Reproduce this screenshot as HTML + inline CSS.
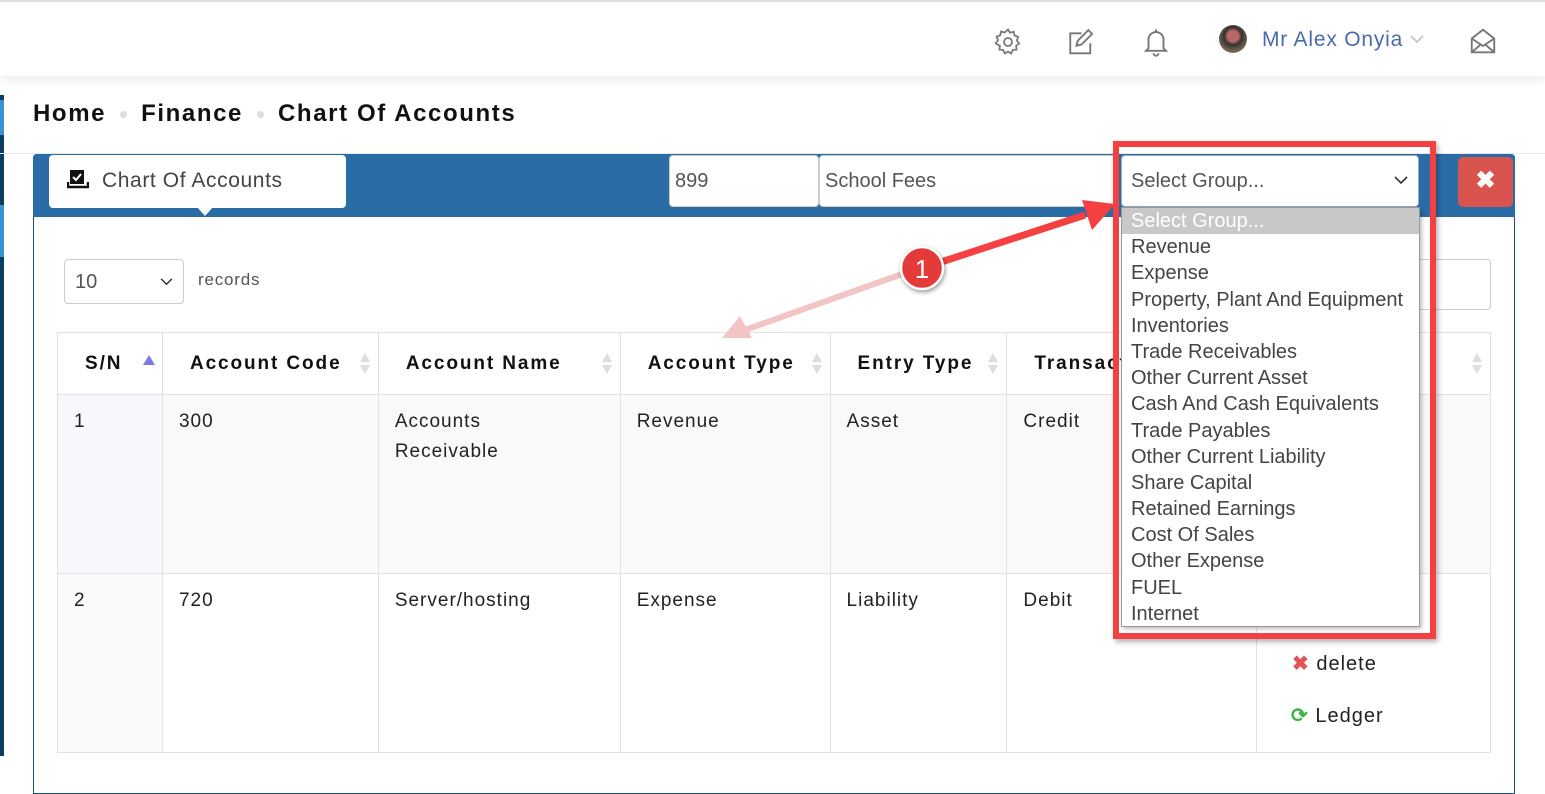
<!DOCTYPE html>
<html><head><meta charset="utf-8"><style>
*{box-sizing:border-box;margin:0;padding:0}
body{width:1545px;height:756px;overflow:hidden;background:#fff;font-family:"Liberation Sans",sans-serif;position:relative}
.abs{position:absolute}
.hdr{left:0;top:0;width:1545px;height:76px;background:#fff;border-top:2px solid #ddd;box-shadow:0 4px 10px rgba(0,0,0,.08)}
.crumb{top:100px;left:33px;font-size:24px;font-weight:bold;color:#111;letter-spacing:1.6px}
.crumb span.d{display:inline-block;width:7px;height:7px;border-radius:50%;background:#ddd;margin:0 14px;vertical-align:middle}
.inp{background:#fff;border:1px solid #ccc;border-radius:4px;font-size:20px;color:#555;padding-left:6px;line-height:50px}
th,td{border:1px solid #e2e2e2;text-align:left}
th{font-size:19px;font-weight:bold;color:#111;letter-spacing:1.9px;height:62px;padding:0 14px 0 27px;position:relative}
td{vertical-align:top;font-size:19px;color:#222;letter-spacing:1px;padding:12px 16px;line-height:30px}
.srt{position:absolute;right:8px;top:20px;width:10px;height:22px}
.srt:before,.srt:after{content:"";position:absolute;left:0;border-left:5px solid transparent;border-right:5px solid transparent}
.srt:before{top:0;border-bottom:9px solid #ddd}
.srt:after{top:12px;border-top:9px solid #ddd}
.dd div{height:26.2px;line-height:26px;padding-left:9px;font-size:20px;color:#444;white-space:nowrap}
.chev{position:absolute;right:10px;top:20px}
</style></head><body>
<div class="abs" style="left:0;top:95px;width:4px;height:661px;background:#0b3d5e"></div>
<div class="abs" style="left:0;top:100px;width:4px;height:35px;background:#3a93d3"></div>
<div class="abs" style="left:0;top:205px;width:4px;height:52px;background:#3a93d3"></div>
<div class="abs hdr"></div>
<svg class="abs" style="left:993px;top:27px" width="30" height="30" viewBox="0 0 24 24" fill="none" stroke="#777" stroke-width="1.4"><circle cx="12" cy="12" r="3.2"/><path d="M12 2l1.6 2.6 3-.8.6 3 2.9 1.1-1.1 2.9 1.9 2.4-2.4 1.9.4 3-3 .3-1.4 2.8-2.5-1.6-2.5 1.6-1.4-2.8-3-.3.4-3L2.1 13l1.9-2.4-1.1-2.9 2.9-1.1.6-3 3 .8z"/></svg>
<svg class="abs" style="left:1066px;top:27px" width="31" height="30" viewBox="0 0 24 24" fill="none" stroke="#777" stroke-width="1.5"><path d="M19 13v8H3V5h9"/><path d="M17.5 2.5l3 3L12 14l-4 1 1-4z"/></svg>
<svg class="abs" style="left:1141px;top:27px" width="30" height="30" viewBox="0 0 24 24" fill="none" stroke="#777" stroke-width="1.5"><path d="M6 17V10a6 6 0 0 1 12 0v7l2 2H4z"/><path d="M10 21a2 2 0 0 0 4 0"/><path d="M12 2v2"/></svg>
<div class="abs" style="left:1219px;top:25px;width:28px;height:28px;border-radius:50%;background:radial-gradient(circle at 50% 40%,#b66 0 25%,#333 40%,#765 70%)"></div>
<div class="abs" style="left:1262px;top:28px;font-size:21px;color:#4a6aa8;letter-spacing:.8px">Mr Alex Onyia</div>
<svg class="abs" style="left:1410px;top:35px" width="14" height="9" viewBox="0 0 14 9"><path d="M1 1l6 6 6-6" stroke="#bbb" stroke-width="1.5" fill="none"/></svg>
<svg class="abs" style="left:1467px;top:26px" width="32" height="30" viewBox="0 0 24 24" fill="none" stroke="#777" stroke-width="1.5"><path d="M3 10l9-7 9 7v11H3z"/><path d="M3 10l9 6 9-6M3 21l7-6M21 21l-7-6"/></svg>

<div class="abs crumb">Home<span class="d"></span>Finance<span class="d"></span>Chart Of Accounts</div>
<div class="abs" style="left:0;top:153px;width:1545px;height:1px;background:#e8e8e8"></div>

<div class="abs" style="left:33px;top:154px;width:1482px;height:640px;border:1px solid #1e4f7a;border-radius:4px 4px 0 0"></div>
<div class="abs" style="left:33px;top:154px;width:1482px;height:63px;background:#2a6ca6;border-radius:4px 4px 0 0"></div>
<div class="abs" style="left:49px;top:155px;width:297px;height:53px;background:#fff;border-radius:4px;font-size:21px;color:#444;letter-spacing:.6px;line-height:52px;padding-left:53px">Chart Of Accounts</div>
<svg class="abs" style="left:67px;top:170px" width="22" height="20" viewBox="0 0 22 20"><rect x="3" y="0" width="14" height="14" fill="#111"/><path d="M6 7l3 3 5-6" stroke="#fff" stroke-width="2" fill="none"/><path d="M1 12v5h20v-5" stroke="#111" stroke-width="2.4" fill="none"/></svg>
<div class="abs" style="left:197px;top:207px;border-left:8px solid transparent;border-right:8px solid transparent;border-top:9px solid #fff"></div>
<div class="abs inp" style="left:669px;top:155px;width:150px;height:52px;padding-left:5px">899</div>
<div class="abs inp" style="left:819px;top:155px;width:300px;height:52px;padding-left:5px">School Fees</div>
<div class="abs inp" style="left:1121px;top:155px;width:298px;height:52px;padding-left:9px;border-color:#9ab">Select Group...<svg class="chev" width="14" height="9" viewBox="0 0 14 9"><path d="M1 1l6 6 6-6" stroke="#333" stroke-width="1.6" fill="none"/></svg></div>
<div class="abs" style="left:1458px;top:157px;width:55px;height:50px;background:#d9534f;border-radius:5px;color:#fff;font-size:24px;font-weight:bold;text-align:center;line-height:48px">&#10006;</div>

<div class="abs inp" style="left:64px;top:259px;width:120px;height:45px;line-height:44px;padding-left:10px;font-size:20px">10<svg class="chev" style="top:18px" width="13" height="8" viewBox="0 0 14 9"><path d="M1 1l6 6 6-6" stroke="#333" stroke-width="1.6" fill="none"/></svg></div>
<div class="abs" style="left:198px;top:270px;font-size:17px;color:#555;letter-spacing:.8px">records</div>
<div class="abs" style="left:1400px;top:259px;width:91px;height:51px;border:1px solid #ccc;border-radius:4px"></div>

<table class="abs" style="left:57px;top:332px;width:1434px;border-collapse:collapse">
<tr><th style="width:105px;padding-left:27px">S/N<span style="position:absolute;left:85px;top:22px;border-left:6px solid transparent;border-right:6px solid transparent;border-bottom:10px solid #7a7adf"></span></th><th style="width:216px">Account Code<span class="srt"></span></th><th style="width:242px">Account Name<span class="srt"></span></th><th style="width:210px">Account Type<span class="srt"></span></th><th style="width:177px">Entry Type<span class="srt"></span></th><th style="width:250px">Transaction<span class="srt"></span></th><th style="width:234px"><span class="srt"></span></th></tr>
<tr style="background:#f9f9f9;height:179px"><td style="background:#f7f8fb">1</td><td>300</td><td>Accounts<br>Receivable</td><td>Revenue</td><td>Asset</td><td>Credit</td><td></td></tr>
<tr style="height:179px"><td style="background:#f9fafc">2</td><td>720</td><td>Server/hosting</td><td>Expense</td><td>Liability</td><td>Debit</td><td></td></tr>
</table>
<div class="abs" style="left:1292px;top:651px;font-size:20px;color:#222;letter-spacing:1px"><span style="color:#e05555;font-weight:bold">&#10006;</span> delete</div>
<div class="abs" style="left:1291px;top:703px;font-size:20px;color:#222;letter-spacing:1px"><span style="color:#3bb34a;font-weight:bold">&#10227;</span> Ledger</div>

<div class="abs dd" style="left:1121px;top:207px;width:299px;height:420px;background:#fff;border:1px solid #999;box-shadow:2px 2px 4px rgba(0,0,0,.25)">
<div style="background:#c8c8c8;color:#fff">Select Group...</div><div>Revenue</div><div>Expense</div><div>Property, Plant And Equipment</div><div>Inventories</div><div>Trade Receivables</div><div>Other Current Asset</div><div>Cash And Cash Equivalents</div><div>Trade Payables</div><div>Other Current Liability</div><div>Share Capital</div><div>Retained Earnings</div><div>Cost Of Sales</div><div>Other Expense</div><div>FUEL</div><div>Internet</div>
</div>
<div class="abs" style="left:1113px;top:141px;width:323px;height:498px;border:6px solid #f44040;box-shadow:2px 3px 5px rgba(0,0,0,.3)"></div>

<svg class="abs" style="left:0;top:0" width="1545" height="756">
<line x1="905" y1="273" x2="745" y2="330" stroke="#f2c4c4" stroke-width="6"/>
<polygon points="722,338 740,316 752,338" fill="#f2c4c4"/>
<line x1="935" y1="264" x2="1085" y2="215" stroke="#f44040" stroke-width="7"/>
<polygon points="1115,204 1082,200 1092,230" fill="#f44040"/>
<circle cx="922" cy="268" r="21" fill="#e53a3a" stroke="#fff" stroke-width="2.5" style="filter:drop-shadow(1px 2px 2px rgba(0,0,0,.4))"/>
<text x="922" y="278" text-anchor="middle" fill="#fff" font-family="Liberation Sans" font-size="26">1</text>
</svg>
</body></html>
